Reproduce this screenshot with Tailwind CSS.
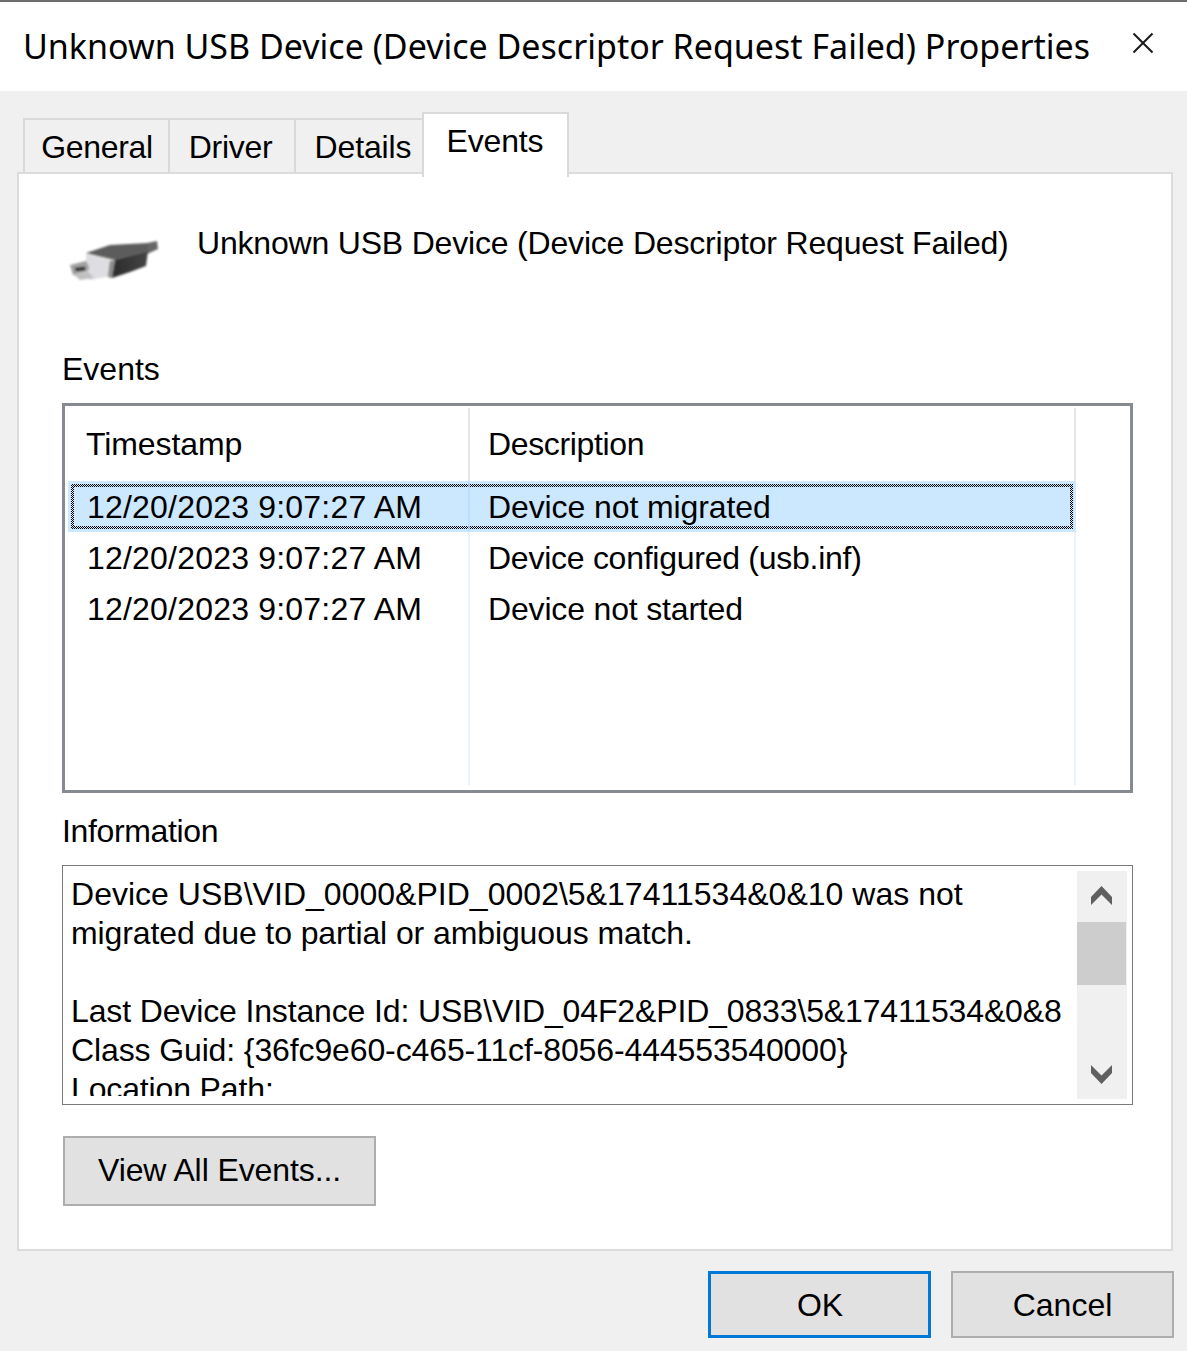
<!DOCTYPE html>
<html lang="en">
  <head>
    <meta charset="UTF-8" />
    <title>Unknown USB Device Properties</title>
    <script src="https://cdn.jsdelivr.net/npm/@tailwindcss/browser@4"></script>
  </head>
  <body class="bg-[#f0f0f0] overflow-hidden">
    <div class="w-[1187px] h-[1351px] flex flex-col text-[32px] text-black font-['Liberation_Sans',sans-serif]">
      <!-- Titlebar -->
      <div class="h-[91px] bg-white border-t-2 border-[#6d6d6d] flex items-center justify-between pl-[23px] pr-[33px] shrink-0">
        <div class="font-['Noto_Sans',sans-serif] text-[34px] leading-[40px] whitespace-nowrap mb-[2px]">Unknown USB Device (Device Descriptor Request Failed) Properties</div>
        <svg class="w-[22px] h-[22px] mb-[8px] shrink-0" viewBox="0 0 22 22" fill="none" stroke="#1a1a1a" stroke-width="2">
          <path d="M1.500 1.500 20.500 20.500M20.500 1.500 1.500 20.500" />
        </svg>
      </div>

      <!-- Tabs -->
      <div class="mt-[21px] ml-[23px] h-[60px] flex items-end shrink-0">
        <div class="w-[147px] h-[54px] border-2 border-b-0 border-[#d9d9d9] flex items-center justify-center pt-[2px] pl-[1px] tracking-[-0.3px]">General</div>
        <div class="w-[126px] h-[54px] border-t-2 border-r-2 border-[#d9d9d9] flex items-center justify-center pt-[2px] pr-[3px] tracking-[-0.3px]">Driver</div>
        <div class="w-[126px] h-[54px] border-t-2 border-[#d9d9d9] flex items-center justify-center pt-[2px] pl-[8px] tracking-[-0.15px]">Details</div>
        <div class="relative z-10 w-[147px] h-[65px] -mb-[5px] bg-white border-2 border-b-0 border-[#d9d9d9] flex items-start justify-center pt-[3px] pr-[1px] tracking-[-0.15px]">Events</div>
      </div>

      <!-- Panel -->
      <div class="ml-[17px] w-[1156px] h-[1079px] bg-white border-2 border-[#dcdcdc] pl-[43px] shrink-0">
        <div class="h-[178px] flex">
          <svg class="w-[100px] h-[60px] mt-[56px] shrink-0" viewBox="60 230 100 60">
            <defs>
              <linearGradient id="usb-front" x1="0" y1="0" x2="1" y2="0">
                <stop offset="0" stop-color="#2c2c2c" />
                <stop offset="1" stop-color="#444" />
              </linearGradient>
            </defs>
            <g class="blur-[0.8px]">
              <path d="M145 243 155 241 156 249 145 254Z" fill="#666" />
              <path d="M84 253 108 245 146 243 146 251 113 260Z" fill="#5c5c5c" />
              <path d="M113 260 146 251 144 266 128 272 110 278Z" fill="url(#usb-front)" />
              <path d="M84 254 113 260 110 276 88 280 84 277 71 275 68 265 84 261Z" fill="#dedee2" />
              <path d="M68 265 84 261 87 267 86 271 71 275Z" fill="#a0a0a0" />
              <path d="M73 268 83 267 83 270 74 271Z" fill="#2e2e2e" />
              <path d="M72 275 86 272 92 278 78 280Z" fill="#c0c0c0" />
              <path d="M108 261 113 260 110 278 106 277Z" fill="#8a8a8a" />
            </g>
          </svg>
          <div class="ml-[35px] mt-[49px] h-[40px] leading-[40px] whitespace-nowrap tracking-[-0.19px]">Unknown USB Device (Device Descriptor Request Failed)</div>
        </div>

        <div class="h-[34px] leading-[34px]">Events</div>

        <!-- Event list -->
        <div class="relative mt-[17px] w-[1071px] h-[390px] border-[3px] border-[#868a91]">
          <div class="h-[75px] pl-[21px] flex items-center">
            <div class="w-[402px] tracking-[-0.1px]">Timestamp</div>
            <div class="tracking-[-0.36px]">Description</div>
          </div>
          <div class="ml-[3px] w-[1008px] flex flex-col">
            <div class="h-[51px] bg-[#cce8ff] p-[3px]">
              <div class="h-full p-[3px] bg-[repeating-conic-gradient(#000_0_25%,#cce8ff_0_50%)] bg-[length:2px_2px]">
                <div class="h-full bg-[#cce8ff] flex items-center pl-[13px]">
                  <div class="w-[401px] tracking-[0.2px]">12/20/2023 9:07:27 AM</div>
                  <div class="tracking-[-0.1px]">Device not migrated</div>
                </div>
              </div>
            </div>
            <div class="h-[51px] flex items-center pl-[19px]">
              <div class="w-[401px] tracking-[0.2px]">12/20/2023 9:07:27 AM</div>
              <div class="tracking-[-0.26px]">Device configured (usb.inf)</div>
            </div>
            <div class="h-[51px] flex items-center pl-[19px]">
              <div class="w-[401px] tracking-[0.2px]">12/20/2023 9:07:27 AM</div>
              <div class="tracking-[-0.17px]">Device not started</div>
            </div>
          </div>
          <!-- column dividers drawn over the rows -->
          <div class="absolute left-[403px] top-[2px] w-[2px] h-[73px] bg-[#e5e5e5]"></div>
          <div class="absolute left-[403px] top-[75px] w-[2px] h-[51px] bg-[#b5dcff]/70"></div>
          <div class="absolute left-[403px] top-[126px] w-[2px] h-[253px] bg-[#eaf3fc]"></div>
          <div class="absolute left-[1009px] top-[2px] w-[2px] h-[73px] bg-[#e5e5e5]"></div>
          <div class="absolute left-[1009px] top-[126px] w-[2px] h-[253px] bg-[#eaf3fc]"></div>
        </div>

        <div class="mt-[21px] h-[34px] leading-[34px] tracking-[-0.36px]">Information</div>

        <!-- Information box -->
        <div class="mt-[17px] w-[1071px] h-[240px] border border-[#7a7a7a] flex">
          <div class="w-[1014px] h-[230px] overflow-hidden pl-[8px] pt-[9px] leading-[39px] whitespace-nowrap shrink-0">
            <div class="tracking-[0.02px]">Device USB\VID_0000&amp;PID_0002\5&amp;17411534&amp;0&amp;10 was not</div>
            <div class="tracking-[-0.1px]">migrated due to partial or ambiguous match.</div>
            <div class="h-[39px]"></div>
            <div class="tracking-[-0.14px]">Last Device Instance Id: USB\VID_04F2&amp;PID_0833\5&amp;17411534&amp;0&amp;8</div>
            <div class="tracking-[-0.12px]">Class Guid: {36fc9e60-c465-11cf-8056-444553540000}</div>
            <div class="tracking-[-0.14px]">Location Path:</div>
          </div>
          <div class="mt-[5px] w-[50px] h-[228px] bg-[#f0f0f0] flex flex-col shrink-0">
            <div class="h-[51px] flex justify-center pt-[15px] pr-[1px]">
              <svg class="w-[21px] h-[19px]" viewBox="0 0 21 19" fill="#606060"><path d="M10.500 0 21 11V19L10.500 8.500 0 19V11Z" /></svg>
            </div>
            <div class="w-[49px] h-[63px] bg-[#cdcdcd]"></div>
            <div class="flex-1 flex justify-center items-end pb-[15px] pr-[1px]">
              <svg class="w-[21px] h-[19px]" viewBox="0 0 21 19" fill="#606060"><path d="M10.500 19 21 8V0L10.500 10.500 0 0V8Z" /></svg>
            </div>
          </div>
        </div>

        <div class="mt-[31px] ml-[1px] w-[313px] h-[70px] bg-[#e1e1e1] border-2 border-[#adadad] flex items-center justify-center pb-[3px] tracking-[-0.1px]">View All Events...</div>
      </div>

      <!-- Dialog buttons -->
      <div class="mt-[20px] pr-[13px] flex justify-end gap-[20px]">
        <div class="w-[223px] h-[67px] bg-[#e1e1e1] border-[3px] border-[#0078d7] flex items-center justify-center pl-[1px]">OK</div>
        <div class="w-[223px] h-[67px] bg-[#e1e1e1] border-2 border-[#adadad] flex items-center justify-center">Cancel</div>
      </div>
    </div>
  </body>
</html>
